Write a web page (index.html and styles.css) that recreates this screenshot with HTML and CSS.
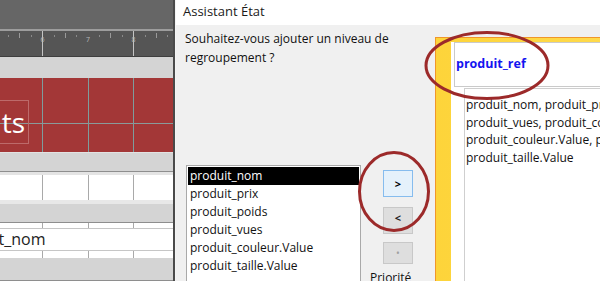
FILE: index.html
```html
<!DOCTYPE html>
<html lang="fr">
<head>
  <meta charset="UTF-8" />
  <title>Assistant État</title>
  <link rel="stylesheet" href="styles.css">
</head>
<body>
  <div class="screen">
    <div class="designer">
      <div class="band top"></div>
      <div class="band top-line"></div>
      <div class="band ruler">
        <span>6</span><span>7</span><span>8</span>
      </div>
      <div class="band ruler-line"></div>
      <div class="band light"></div>
      <div class="band header">
        <div class="label"><span>Produits</span></div>
      </div>
      <div class="band light mid"></div>
      <div class="band sep-dark"></div>
      <div class="band cells tall"></div>
      <div class="band light short"></div>
      <div class="band sep-dark"></div>
      <div class="band cells gap"></div>
      <div class="band field"><span>produit_nom</span></div>
      <div class="band cells gap2"></div>
      <div class="band light bottom"></div>
      <div class="band sep-dark"></div>
    </div>

    <div class="wizard">
      <div class="wizard-title">Assistant État</div>
      <div class="wizard-body">
        <div class="pick">
          <p class="prompt">Souhaitez-vous ajouter un niveau de<br>regroupement ?</p>
          <div class="pick-row">
            <ul class="fields">
              <li class="selected">produit_nom</li>
              <li>produit_prix</li>
              <li>produit_poids</li>
              <li>produit_vues</li>
              <li>produit_couleur.Value</li>
              <li>produit_taille.Value</li>
            </ul>
            <div class="moves">
              <button class="move active">&gt;</button>
              <button class="move off">&lt;</button>
              <button class="move off dot">&bull;</button>
              <div class="priority">Priorité</div>
            </div>
          </div>
        </div>

        <div class="preview">
          <div class="preview-inner">
            <div class="group-head">produit_ref</div>
            <div class="group-fields">
              produit_nom, produit_prix, produit_poids,<br>
              produit_vues, produit_couleur.Value,<br>
              produit_couleur.Value, produit_taille.Value<br>
              produit_taille.Value
            </div>
          </div>
        </div>
      </div>
    </div>

    <!-- annotation circles drawn over the screenshot -->
    <svg class="marks" width="600" height="281" viewBox="0 0 600 281">
      <ellipse cx="487" cy="65.5" rx="61" ry="33" />
      <ellipse cx="394" cy="191.5" rx="34.5" ry="39" />
    </svg>
  </div>
</body>
</html>
```

FILE: styles.css
```css
body { margin: 0; width: 600px; height: 281px; overflow: hidden; font-family: "Open Sans", "Noto Sans", sans-serif; }
.screen { position: relative; display: flex; width: 600px; height: 281px; overflow: hidden; }

/* report designer on the left */
.designer { width: 173px; border-right: 2px solid #4a4a4a; display: flex; flex-direction: column; overflow: hidden; flex-shrink: 0; }
.band { flex-shrink: 0; }
.top { height: 29px; background: #666666; }
.top-line { height: 2px; background: #9d9d9d; }
.ruler {
  height: 25px; background-color: #555555; display: flex; padding-left: 40.5px; box-sizing: border-box;
  background-image:
    linear-gradient(90deg, transparent 42px, #c4c4c4 42px 43px, transparent 43px 133px, #c4c4c4 133px 134px, transparent 134px),
    repeating-linear-gradient(90deg, #9a9a9a 0 1px, transparent 1px 45.5px),
    repeating-linear-gradient(90deg, #8a8a8a 0 1px, transparent 1px 22.75px);
  background-size: 100% 100%, 100% 5px, 100% 2px;
  background-position: 0 0, 19px 2px, 8px 4px;
  background-repeat: no-repeat, repeat-x, repeat-x;
}
.ruler span { width: 45.5px; flex-shrink: 0; font-size: 7px; line-height: 7px; color: #b8b8b8; padding-top: 5px; }
.ruler-line { height: 1px; background: #3e3e3e; }
.light { height: 21px; background: #d4d4d4; }
.light.mid { height: 19px; border-top: 1px solid #e2e2e2; box-sizing: border-box; }
.light.short { height: 18px; }
.light.bottom { height: 22px; }
.sep-dark { height: 1px; background: #8e8e8e; }

.header {
  height: 74px; background-color: #a33737; box-sizing: border-box; padding-top: 22px;
  background-image:
    linear-gradient(90deg, transparent 42px, #7e9c9c 42px 43px, transparent 43px 88px, #7e9c9c 88px 89px, transparent 89px 133px, #7e9c9c 133px 134px, transparent 134px),
    linear-gradient(transparent 45px, #8a9a9a 45px 46px, transparent 46px);
}
.label { width: 28px; height: 42px; border: 1px solid #bd6a6a; border-left: none; display: flex; justify-content: flex-end; align-items: center; }
.label span { color: #ffffff; font-size: 28px; white-space: nowrap; line-height: 42px; padding-right: 3px; }

.cells {
  background-color: #ffffff;
  background-image: linear-gradient(90deg, transparent 42px, #a9a9a9 42px 43px, transparent 43px 88px, #a9a9a9 88px 89px, transparent 89px 133px, #a9a9a9 133px 134px, transparent 134px);
}
.cells.tall { height: 32px; border-top: 3px solid #e4e4e4; border-bottom: 4px solid #e8e8e8; box-sizing: border-box; }
.cells.gap { height: 5px; }
.cells.gap2 { height: 7px; }
.field { height: 23px; background: #ffffff; border-top: 1px solid #c6c6c6; border-bottom: 1px solid #c6c6c6; box-sizing: border-box; display: flex; }
.field span { font-size: 16px; line-height: 21px; color: #222; white-space: nowrap; margin-left: -51px; }

/* wizard dialog */
.wizard { flex: 1; display: flex; flex-direction: column; background: #f0f0f0; border-left: 1px solid #f4f4f4; }
.wizard-title { height: 25px; background: #ffffff; font-size: 13px; line-height: 22px; padding-left: 7px; color: #1a1a1a; flex-shrink: 0; }
.wizard-body { flex: 1; display: flex; }

.pick { width: 250px; padding-left: 9px; flex-shrink: 0; }
.prompt { margin: 0; padding-top: 4px; font-size: 12px; line-height: 19px; color: #111; }
.pick-row { display: flex; margin-top: 98px; }
.fields { list-style: none; margin: 0 0 0 1px; padding: 1px; width: 171px; height: 130px; background: #ffffff; border: 1px solid #a9a9a9; border-bottom: none; }
.fields li { font-size: 12px; line-height: 18px; height: 18px; padding-left: 2px; color: #111; }
.fields li.selected { background: #000000; color: #ffffff; }

.moves { display: flex; flex-direction: column; align-items: flex-start; margin-left: 22px; padding-top: 5px; }
.move { width: 30px; height: 27px; padding: 0; font-family: "Open Sans", sans-serif; font-size: 11px; line-height: 20px; box-sizing: border-box; }
.move.active { background: #e5f1fb; border: 1px solid #86bcee; color: #000; font-weight: bold; }
.move.off { background: #dedede; border: 1px solid #c8c8c8; color: #222; margin-top: 10px; font-weight: bold; padding-bottom: 6px; }
.move.dot { height: 22px; margin-top: 8px; color: #a0a0a0; font-size: 10px; font-weight: normal; padding-bottom: 0; }
.priority { margin: 6px 0 0 -13px; font-size: 12px; line-height: 16px; color: #111; }

.preview { flex: 1; margin-top: 12px; border-top: 1px solid #f0962a; border-left: 1px solid #f0962a; background: linear-gradient(90deg, #fdd43a, #ffdd55); padding: 4px 0 0 15px; }
.preview-inner { height: 100%; background: #ffffff; padding-left: 3px; }
.group-head { height: 45px; box-sizing: border-box; border: 1px solid #cacaca; border-right: none; padding: 0 0 2px 1px; display: flex; align-items: center; font-size: 12.5px; font-weight: bold; color: #1414f0; }
.group-fields { margin: 1px 0 0 10px; border-top: 1px solid #cfcfcf; border-left: 1px solid #cfcfcf; padding: 7px 0 0 1px; font-size: 12px; line-height: 17.5px; color: #111; white-space: nowrap; overflow: hidden; height: 200px; }

.marks { position: absolute; left: 0; top: 0; pointer-events: none; }
.marks ellipse { fill: none; stroke: #9c2a2a; stroke-width: 3; }
```
